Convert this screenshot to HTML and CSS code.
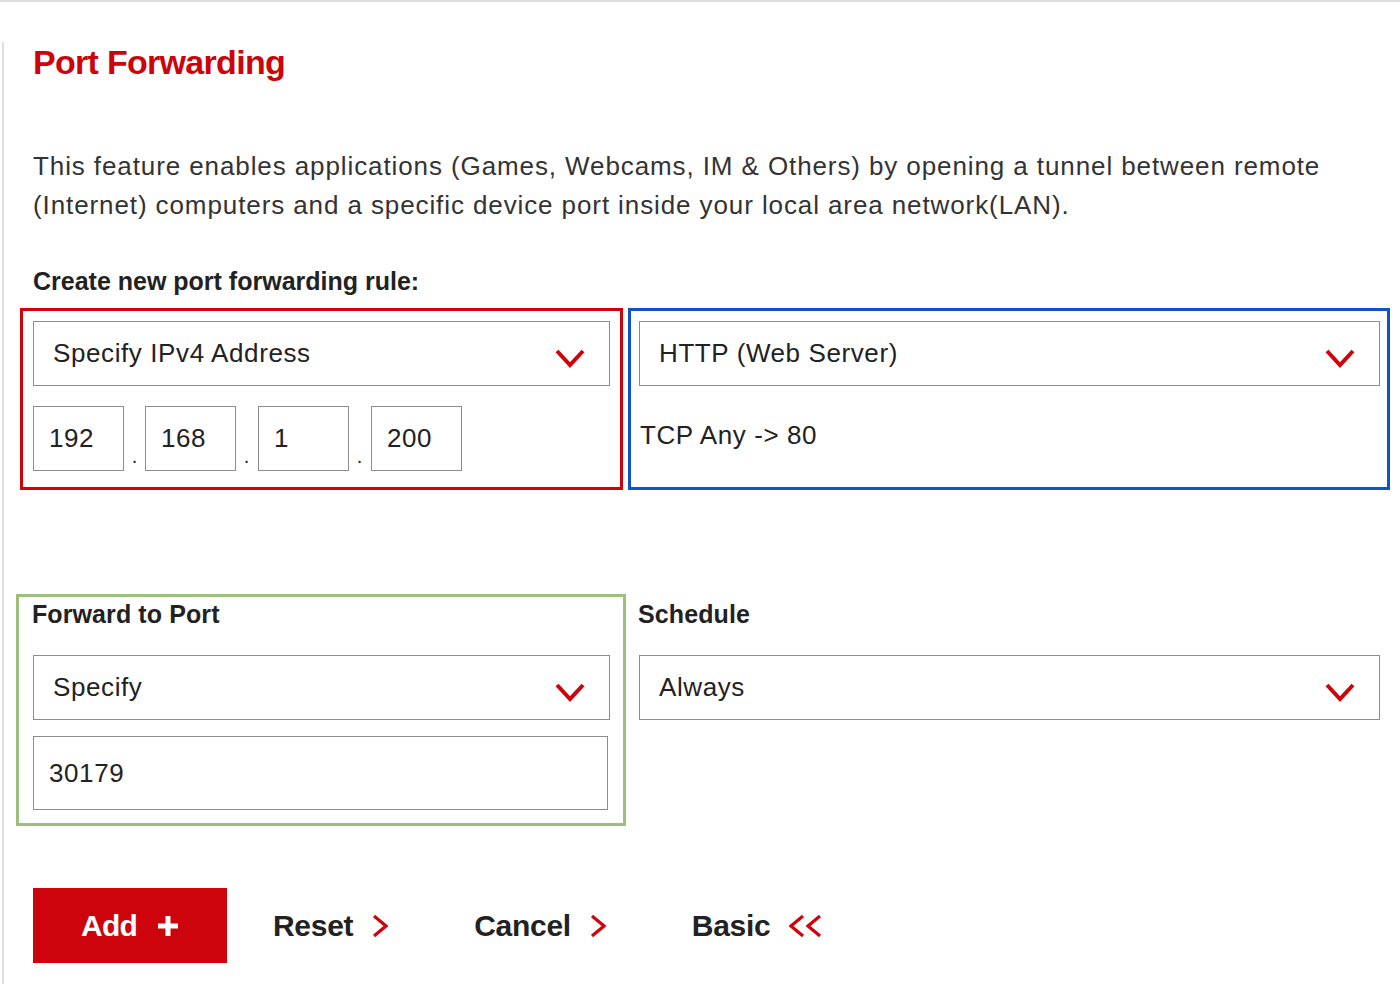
FILE: index.html
```html
<!DOCTYPE html>
<html lang="en">
<head>
<meta charset="utf-8">
<title>Port Forwarding</title>
<link rel="stylesheet" href="styles.css">
</head>
<body>
<div class="page">
  <main class="panel">
    <h1 class="title">Port Forwarding</h1>
    <p class="intro">This feature enables applications (Games, Webcams, IM &amp; Others) by opening a tunnel between remote (Internet) computers and a specific device port inside your local area network(LAN).</p>
    <h2 class="subhead">Create new port forwarding rule:</h2>

    <div class="row row-top">
      <section class="box box-red">
        <div class="select">
          <span>Specify IPv4 Address</span>
          <svg class="chev" width="30" height="20" viewBox="0 0 30 20"><polyline points="2,3 15,17 28,3" fill="none" stroke="#cd040b" stroke-width="4"/></svg>
        </div>
        <div class="ip-row">
          <div class="ip">192</div><span class="dot">.</span>
          <div class="ip">168</div><span class="dot">.</span>
          <div class="ip">1</div><span class="dot">.</span>
          <div class="ip">200</div>
        </div>
      </section>
      <section class="box box-blue">
        <div class="select">
          <span>HTTP (Web Server)</span>
          <svg class="chev" width="30" height="20" viewBox="0 0 30 20"><polyline points="2,3 15,17 28,3" fill="none" stroke="#cd040b" stroke-width="4"/></svg>
        </div>
        <p class="proto">TCP Any -&gt; 80</p>
      </section>
    </div>

    <div class="row row-mid">
      <section class="box box-green">
        <h3 class="label">Forward to Port</h3>
        <div class="select">
          <span>Specify</span>
          <svg class="chev" width="30" height="20" viewBox="0 0 30 20"><polyline points="2,3 15,17 28,3" fill="none" stroke="#cd040b" stroke-width="4"/></svg>
        </div>
        <div class="text-input">30179</div>
      </section>
      <section class="sched">
        <h3 class="label">Schedule</h3>
        <div class="select">
          <span>Always</span>
          <svg class="chev" width="30" height="20" viewBox="0 0 30 20"><polyline points="2,3 15,17 28,3" fill="none" stroke="#cd040b" stroke-width="4"/></svg>
        </div>
      </section>
    </div>

    <div class="actions">
      <button class="btn-add">Add <svg width="22" height="22" viewBox="0 0 22 22"><path d="M11 1V21M1 11H21" stroke="#fff" stroke-width="5" fill="none"/></svg></button>
      <a class="link">Reset <svg width="16" height="24" viewBox="0 0 16 24"><polyline points="2,2 14,12 2,22" fill="none" stroke="#cd040b" stroke-width="3.2"/></svg></a>
      <a class="link">Cancel <svg width="16" height="24" viewBox="0 0 16 24"><polyline points="2,2 14,12 2,22" fill="none" stroke="#cd040b" stroke-width="3.2"/></svg></a>
      <a class="link">Basic <svg width="34" height="24" viewBox="0 0 34 24"><polyline points="14,2 2,12 14,22" fill="none" stroke="#cd040b" stroke-width="3.2"/><polyline points="31,2 19,12 31,22" fill="none" stroke="#cd040b" stroke-width="3.2"/></svg></a>
    </div>
  </main>
</div>
</body>
</html>
```

FILE: styles.css
```css
* { box-sizing: border-box; }
html, body { margin: 0; padding: 0; background: #fff; }
body {
  font-family: "Liberation Sans", Arial, sans-serif;
  color: #222;
  width: 1400px;
  height: 984px;
  overflow: hidden;
}
.page {
  border-top: 2px solid #dcdcdc;
  padding-top: 38px;
  height: 984px;
}
.panel {
  margin-left: 2px;
  border-left: 2px solid #dedede;
  padding-left: 16px;
  height: 944px;
}
.title {
  margin: 2px 0 0 13px;
  font-size: 34px;
  line-height: 41px;
  font-weight: 700;
  color: #cd040b;
  letter-spacing: -0.7px;
}
.intro {
  margin: 64px 0 0 13px;
  width: 1345px;
  font-size: 26px;
  line-height: 39px;
  letter-spacing: 0.9px;
  color: #333;
}
.subhead {
  margin: 42px 0 0 13px;
  font-size: 25px;
  line-height: 29px;
  font-weight: 700;
  letter-spacing: 0;
  color: #222;
}
.row { display: flex; }
.row-top { margin-top: 12px; gap: 5px; }
.box { border: 3px solid; }
.box-red {
  width: 603px;
  border-color: #cd040b;
  padding: 10px 10px 16px 10px;
}
.box-blue {
  width: 762px;
  border-color: #1254c8;
  padding: 10px 7px 16px 8px;
}
.select {
  height: 65px;
  border: 1px solid #8c8c8c;
  display: flex;
  align-items: center;
  justify-content: space-between;
  padding: 0 24px 0 19px;
  font-size: 26px;
  letter-spacing: 0.6px;
  color: #222;
}
.chev { margin-top: 8px; }
.ip-row {
  display: flex;
  align-items: flex-end;
  margin-top: 20px;
}
.ip {
  width: 91px;
  height: 65px;
  border: 1px solid #8c8c8c;
  display: flex;
  align-items: center;
  padding-left: 15px;
  font-size: 26px;
  letter-spacing: 0.6px;
  color: #222;
}
.ip:nth-of-type(n+3) { margin-left: 1px; }
.dot {
  width: 21px;
  text-align: center;
  font-size: 20px;
  line-height: 14px;
  padding-bottom: 8px;
  color: #222;
}
.proto {
  margin: 30px 0 0 1px;
  font-size: 26px;
  line-height: 39px;
  letter-spacing: 0.6px;
  color: #222;
}
.row-mid { margin-top: 104px; margin-left: -4px; gap: 3px; }
.box-green {
  width: 610px;
  border-color: #9bbf7c;
  padding: 3px 13px 13px 14px;
}
.label {
  margin: 0;
  font-size: 25px;
  line-height: 29px;
  font-weight: 700;
  letter-spacing: 0.1px;
  color: #222;
}
.box-green .label { margin-left: -1px; }
.box-green .select { margin-top: 26px; }
.text-input {
  margin-top: 16px;
  width: 575px;
  height: 74px;
  border: 1px solid #8c8c8c;
  display: flex;
  align-items: center;
  padding-left: 15px;
  font-size: 26px;
  letter-spacing: 0.6px;
  color: #222;
}
.sched {
  width: 752px;
  padding: 6px 0 0 9px;
}
.sched .select { margin-top: 26px; margin-left: 1px; width: 741px; }
.actions {
  display: flex;
  align-items: center;
  margin: 62px 0 0 13px;
}
.btn-add {
  width: 194px;
  height: 75px;
  background: #cd040b;
  border: 0;
  color: #fff;
  font-family: "Liberation Sans", Arial, sans-serif;
  font-size: 30px;
  font-weight: 700;
  letter-spacing: -0.8px;
  display: flex;
  align-items: center;
  justify-content: center;
  gap: 20px;
  padding: 0;
}
.link {
  display: flex;
  align-items: center;
  gap: 19px;
  font-size: 30px;
  font-weight: 700;
  letter-spacing: -0.3px;
  color: #222;
  margin-left: 46px;
}
.link + .link { margin-left: 86px; }
```
